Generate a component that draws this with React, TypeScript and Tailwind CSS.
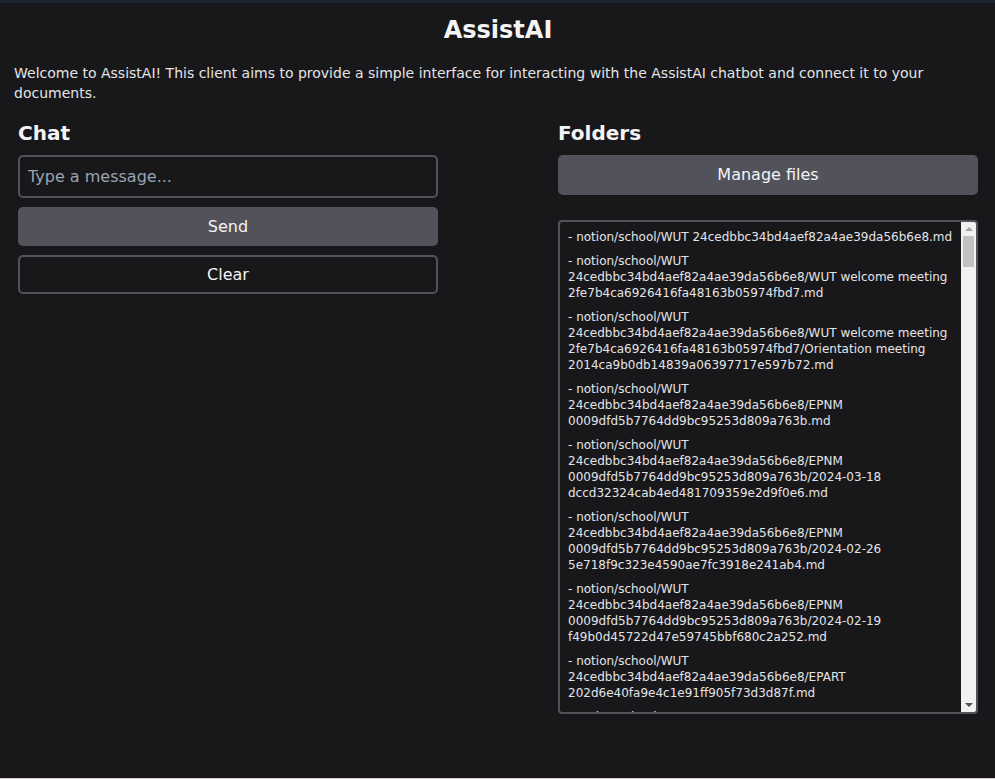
import { useState } from 'react';

const WUT = 'notion/school/WUT 24cedbbc34bd4aef82a4ae39da56b6e8';
const EPNM = `${WUT}/EPNM 0009dfd5b7764dd9bc95253d809a763b`;
const EPART = `${WUT}/EPART 202d6e40fa9e4c1e91ff905f73d3d87f`;

const files = [
  `${WUT}.md`,
  `${WUT}/WUT welcome meeting 2fe7b4ca6926416fa48163b05974fbd7.md`,
  `${WUT}/WUT welcome meeting 2fe7b4ca6926416fa48163b05974fbd7/Orientation meeting 2014ca9b0db14839a06397717e597b72.md`,
  `${EPNM}.md`,
  `${EPNM}/2024-03-18 dccd32324cab4ed481709359e2d9f0e6.md`,
  `${EPNM}/2024-02-26 5e718f9c323e4590ae7fc3918e241ab4.md`,
  `${EPNM}/2024-02-19 f49b0d45722d47e59745bbf680c2a252.md`,
  `${EPART}.md`,
  `${EPART}/2024-03-14 8b1f0c2e7a5d4e3f9c6b1a2d3e4f5a6b.md`,
  `${EPART}/2024-03-07 1c2d3e4f5a6b7c8d9e0f1a2b3c4d5e6f.md`,
];

function FakeScrollbar() {
  return (
    <div className="flex w-[15px] shrink-0 flex-col bg-[#f1f1f1]">
      <div className="flex h-[14px] items-center justify-center">
        <span className="h-0 w-0 border-x-[4px] border-b-[4px] border-x-transparent border-b-[#a3a3a3]" />
      </div>
      <div className="flex-1 px-[2px]">
        <div className="h-[31px] bg-[#c1c1c1]" />
      </div>
      <div className="flex h-[15px] items-center justify-center">
        <span className="h-0 w-0 border-x-[4px] border-t-[4px] border-x-transparent border-t-[#505050]" />
      </div>
    </div>
  );
}

export default function App() {
  const [message, setMessage] = useState('');

  return (
    <div className="flex h-[779px] flex-col bg-[#18181b] font-['DejaVu_Sans',sans-serif] text-[#f4f4f5]">
      <div className="h-[3px] bg-[#1f2433]" />
      <main className="flex-1 pl-[14px] pr-[13px]">
        <h1 className="mt-[11px] text-center text-2xl font-bold">AssistAI</h1>
        <p className="mt-[17px] text-sm leading-5 text-[#e4e4e7]">
          Welcome to AssistAI! This client aims to provide a simple interface for interacting with the AssistAI chatbot
          and connect it to your documents.
        </p>

        <div className="mt-[12px] flex justify-between">
          <section className="flex w-[428px] flex-col p-1">
            <h2 className="text-xl font-bold">Chat</h2>
            <input
              value={message}
              onChange={(e) => setMessage(e.target.value)}
              placeholder="Type a message..."
              className="mt-[8px] h-[43px] rounded-[5px] border-2 border-[#52525b] bg-transparent px-2 text-base text-[#f4f4f5] outline-none placeholder:text-[#9ca3af]"
            />
            <button className="mt-[9px] h-[39px] rounded-[5px] bg-[#52525b] text-base text-[#f4f4f5]">Send</button>
            <button
              onClick={() => setMessage('')}
              className="mt-[9px] h-[39px] rounded-[5px] border-2 border-[#52525b] text-base text-[#f4f4f5]"
            >
              Clear
            </button>
          </section>

          <section className="flex w-[428px] flex-col p-1">
            <h2 className="text-xl font-bold">Folders</h2>
            <button className="mt-[8px] h-[40px] rounded-[5px] bg-[#52525b] text-base text-[#f4f4f5]">
              Manage files
            </button>
            <div className="mt-[25px] flex h-[494px] w-[420px] overflow-hidden rounded-[4px] border-2 border-[#52525b]">
              <div className="min-w-0 flex-1 overflow-hidden pl-2 pr-2 pt-[7px] text-xs leading-4 text-[#e4e4e7]">
                {files.map((f) => (
                  <p key={f} className="mb-2">
                    - {f}
                  </p>
                ))}
              </div>
              <FakeScrollbar />
            </div>
          </section>
        </div>
      </main>
      <div className="h-px bg-[#d6d3cd]" />
    </div>
  );
}
